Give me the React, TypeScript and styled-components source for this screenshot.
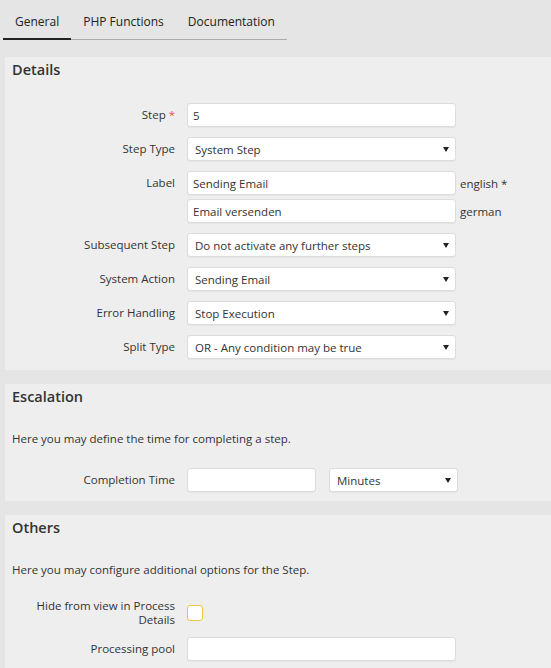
import { ReactNode } from "react";
import styled, { createGlobalStyle } from "styled-components";

const GlobalStyle = createGlobalStyle`
  body {
    margin: 0;
    background: #e5e5e5;
    font-family: "Open Sans", "Liberation Sans", sans-serif;
    font-size: 11.5px;
    color: #333;
    overflow: hidden;
  }
`;

const Page = styled.div`
  padding-bottom: 40px;
`;

const TabBar = styled.div`
  display: flex;
  width: fit-content;
  margin-left: 3px;
  border-bottom: 1px solid #aaa;
  margin-bottom: 17px;
`;

const Tab = styled.div<{ $active?: boolean }>`
  padding: 13px 12px 7px;
  font-size: 12px;
  line-height: 18px;
  color: #222;
  margin-bottom: -1px;
  border-bottom: 2px solid ${({ $active }) => ($active ? "#222" : "transparent")};
`;

const Panel = styled.section<{ $bottom: number }>`
  background: #eeeeee;
  margin: 0 0 14px 5px;
  padding-bottom: ${({ $bottom }) => $bottom}px;
`;

const PanelTitle = styled.h2`
  margin: 0;
  padding: 3px 7px 5px;
  font-size: 14.5px;
  font-weight: 600;
  line-height: 20px;
  color: #333;
`;

const PanelBody = styled.div`
  padding-top: 18px;
  display: flex;
  flex-direction: column;
  gap: 10px;
`;

const Intro = styled.p`
  margin: 0 0 10px 7px;
  line-height: 18px;
`;

const Row = styled.div`
  display: grid;
  grid-template-columns: 170px 1fr;
  column-gap: 12px;
  align-items: start;
`;

const Label = styled.label<{ $center?: boolean }>`
  text-align: right;
  line-height: ${({ $center }) => ($center ? "14px" : "24px")};
  padding-left: 20px;
  align-self: ${({ $center }) => ($center ? "center" : "start")};
`;

const Required = styled.span`
  color: #e8535b;
`;

const Fields = styled.div`
  display: flex;
  flex-direction: column;
  gap: 4px;
`;

const FieldLine = styled.div`
  display: flex;
  align-items: center;
  gap: 13px;
`;

const Input = styled.input<{ $width?: number }>`
  box-sizing: border-box;
  width: ${({ $width }) => $width ?? 269}px;
  height: 24px;
  padding: 0 5px;
  border: 1px solid #dcdcdc;
  border-radius: 3px;
  background: #fff;
  box-shadow: 0 1px 1px rgba(0, 0, 0, 0.04);
  font: inherit;
  color: #333;
  outline: none;
`;

const Suffix = styled.span`
  margin-left: -9px;
  color: #333;
`;

const SelectWrap = styled.div<{ $width?: number }>`
  position: relative;
  width: ${({ $width }) => $width ?? 269}px;
  height: 24px;
`;

const Select = styled.select`
  box-sizing: border-box;
  width: 100%;
  height: 24px;
  padding: 0 20px 0 7px;
  border: 1px solid #dcdcdc;
  border-radius: 3px;
  background: #fff;
  box-shadow: 0 1px 1px rgba(0, 0, 0, 0.04);
  appearance: none;
  font: inherit;
  color: #333;
  outline: none;
`;

const Arrow = styled.svg`
  position: absolute;
  right: 7px;
  top: 10px;
  pointer-events: none;
`;

const Checkbox = styled.div`
  width: 16px;
  height: 16px;
  box-sizing: border-box;
  border: 1px solid #f3c53c;
  border-radius: 3px;
  background: #fff;
  align-self: center;
`;

const Dropdown = ({ value, width }: { value: string; width?: number }) => (
  <SelectWrap $width={width}>
    <Select defaultValue={value}>
      <option>{value}</option>
    </Select>
    <Arrow width="6" height="5" viewBox="0 0 6 5">
      <path d="M0 0h6L3 5z" fill="#222" />
    </Arrow>
  </SelectWrap>
);

const FormRow = ({ label, children, center }: { label: ReactNode; children: ReactNode; center?: boolean }) => (
  <Row>
    <Label $center={center}>{label}</Label>
    {children}
  </Row>
);

export default function App() {
  return (
    <Page>
      <GlobalStyle />
      <TabBar>
        <Tab $active>General</Tab>
        <Tab>PHP Functions</Tab>
        <Tab>Documentation</Tab>
      </TabBar>

      <Panel $bottom={11}>
        <PanelTitle>Details</PanelTitle>
        <PanelBody>
          <FormRow label={<>Step <Required>*</Required></>}>
            <Input defaultValue="5" />
          </FormRow>
          <FormRow label="Step Type">
            <Dropdown value="System Step" />
          </FormRow>
          <FormRow label="Label">
            <Fields>
              <FieldLine>
                <Input defaultValue="Sending Email" />
                <Suffix>english *</Suffix>
              </FieldLine>
              <FieldLine>
                <Input defaultValue="Email versenden" />
                <Suffix>german</Suffix>
              </FieldLine>
            </Fields>
          </FormRow>
          <FormRow label="Subsequent Step">
            <Dropdown value="Do not activate any further steps" />
          </FormRow>
          <FormRow label="System Action">
            <Dropdown value="Sending Email" />
          </FormRow>
          <FormRow label="Error Handling">
            <Dropdown value="Stop Execution" />
          </FormRow>
          <FormRow label="Split Type">
            <Dropdown value="OR - Any condition may be true" />
          </FormRow>
        </PanelBody>
      </Panel>

      <Panel $bottom={9}>
        <PanelTitle>Escalation</PanelTitle>
        <PanelBody>
          <Intro>Here you may define the time for completing a step.</Intro>
          <FormRow label="Completion Time">
            <FieldLine>
              <Input $width={129} />
              <Dropdown value="Minutes" width={129} />
            </FieldLine>
          </FormRow>
        </PanelBody>
      </Panel>

      <Panel $bottom={12}>
        <PanelTitle>Others</PanelTitle>
        <PanelBody>
          <Intro>Here you may configure additional options for the Step.</Intro>
          <FormRow label="Hide from view in Process Details" center>
            <Checkbox />
          </FormRow>
          <FormRow label="Processing pool">
            <Input />
          </FormRow>
        </PanelBody>
      </Panel>
    </Page>
  );
}
